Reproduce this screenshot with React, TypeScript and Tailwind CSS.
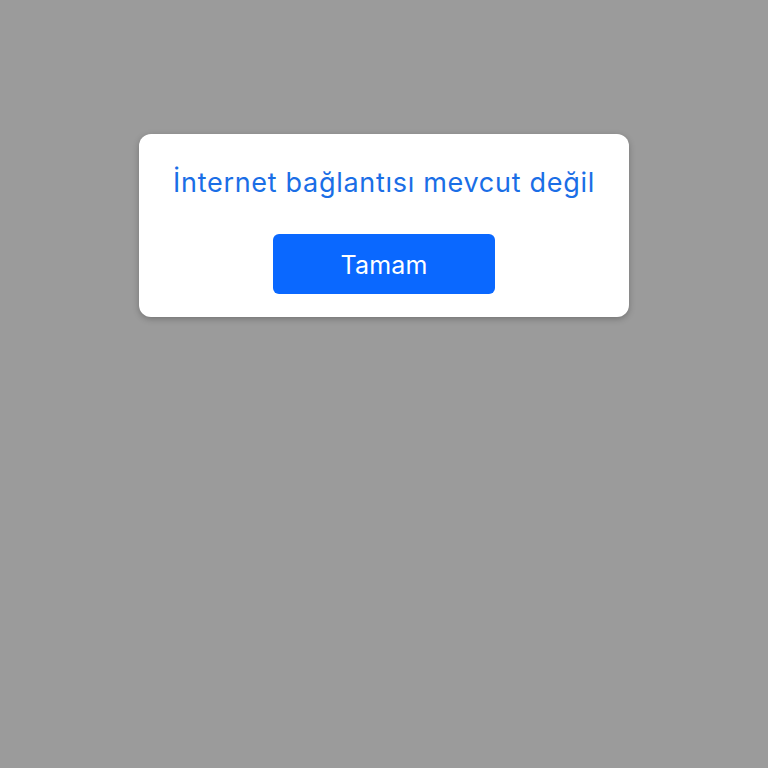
export default function App() {
  return (
    <div className="min-h-[768px] w-full bg-[#9b9b9b] pt-[134px]" style={{ fontFamily: 'Inter, "Noto Sans", sans-serif' }}>
      <div className="ml-[139px] flex w-[490px] flex-col items-center rounded-[12px] bg-white pt-[33px] pb-[23px] shadow-[0_2px_6px_rgba(0,0,0,0.25)]">
        <div className="text-[27px] leading-[32px] tracking-[0.7px] text-[#1a6ee6]">İnternet bağlantısı mevcut değil</div>
        <button className="mt-[35px] flex h-[60px] w-[222px] items-center justify-center rounded-[6px] bg-[#0a68ff] pt-[3px] text-[25px] tracking-[0.2px] text-white">
          Tamam
        </button>
      </div>
    </div>
  );
}
